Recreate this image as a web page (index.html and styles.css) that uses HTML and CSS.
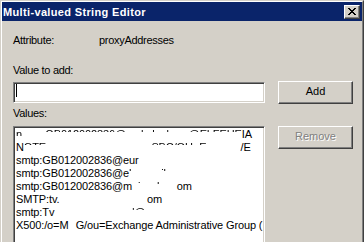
FILE: index.html
```html
<!DOCTYPE html>
<html lang="en">
<head>
    <meta charset="UTF-8">
    <title>Multi-valued String Editor</title>
    <link rel="stylesheet" href="styles.css">
</head>
<body>

    <div class="window">
        <div class="frame">
            <div class="titlebar">
                <span class="title">Multi-valued String Editor</span>
                <div class="close">
                    <svg width="8" height="7" viewBox="0 0 8 7" shape-rendering="crispEdges">
                        <path fill="#000" d="M0 0h2v1H0zM6 0h2v1H6zM1 1h2v1H1zM5 1h2v1H5zM2 2h4v1H2zM3 3h2v1H3zM2 4h4v1H2zM1 5h2v1H1zM5 5h2v1H5zM0 6h2v1H0zM6 6h2v1H6z"/>
                    </svg>
                </div>
            </div>

            <div class="content">
                <div class="attr">
                    <span class="attr-name">Attribute:</span>
                    <span>proxyAddresses</span>
                </div>

                <div class="label label-value">Value to add:</div>
                <div class="row row-input">
                    <div class="textbox"><span class="caret"></span></div>
                    <div class="button">Add</div>
                </div>

                <div class="label label-values">Values:</div>
                <div class="row">
                    <div class="list">
                        <div><span class="half">n</span><span class="hide">otes:</span><span class="top">GB012002836@</span><span class="hide">eu.</span><span class="top">hsbc.l</span><span class="hide">ocal</span><span class="top">@ELFEHE</span>IA</div>
                        <div>N<span class="top">OTE</span><span class="hide">S:GB012002836/O=H</span><span class="top">SBC/OU=E</span><span class="hide">UR/CN</span>/E</div>
                        <div>smtp:GB012002836@eur<span class="hide">ope.hsbc.com</span></div>
                        <div>smtp:GB012002836@e<span class="top">l</span><span class="hide">ab.</span><span class="top">mail.c</span></div>
                        <div>smtp:GB012002836@m<span class="top">ai</span><span class="hide">l.h</span><span class="top">sbc</span><span class="hide">.c</span>om</div>
                        <div>SMTP:tv.<span class="hide">walker@hsb</span><span class="top">c.</span><span class="hide">uk.c</span>om</div>
                        <div>smtp:Tv<span class="hide">.Walker@hsbcn.</span><span class="top">'@euro</span></div>
                        <div>X500:/o=M<span class="hide">S</span>G/ou=Exchange Administrative Group (</div>
                    </div>
                    <div class="button disabled">Remove</div>
                </div>
            </div>
        </div>
    </div>

</body>
</html>
```

FILE: styles.css
```css
body {
    margin: 0;
    width: 364px;
    height: 242px;
    overflow: hidden;
    background-color: #d4d0c8;
    font-family: "Liberation Sans", Arial, sans-serif;
    font-size: 11px;
    color: #000;
}
.window {
    box-sizing: border-box;
    width: 364px;
    height: 242px;
    border: 1px solid;
    border-bottom: none;
    border-color: #d4d0c8 #404040 #404040 #d4d0c8;
}
.frame {
    box-sizing: border-box;
    height: 100%;
    border: 1px solid;
    border-bottom: none;
    border-color: #fff #808080 #808080 #fff;
}
.titlebar {
    display: flex;
    justify-content: space-between;
    align-items: flex-start;
    height: 19px;
    background-color: #0a246a;
    color: #fff;
}
.title {
    padding: 1px 0 0 1px;
    line-height: 18px;
    font-weight: bold;
    letter-spacing: 0.35px;
}
.close {
    box-sizing: border-box;
    width: 16px;
    height: 14px;
    margin: 3px 2px 0 0;
    padding: 2px 0 0 3px;
    background-color: #d4d0c8;
    border: 1px solid;
    border-color: #fff #404040 #404040 #fff;
    box-shadow: inset -1px -1px #808080;
}
.close svg {
    display: block;
}
.content {
    padding-left: 11px;
}
.attr {
    display: flex;
    margin-top: 13px;
    line-height: 13px;
    letter-spacing: -0.3px;
}
.attr-name {
    width: 86px;
}
.label {
    line-height: 13px;
    letter-spacing: -0.3px;
}
.label-value {
    margin-top: 17px;
}
.label-values {
    margin-top: 3px;
}
.row {
    display: flex;
    align-items: flex-start;
}
.row-input {
    margin-top: 4px;
}
.label-values + .row {
    margin-top: 6px;
}
.textbox {
    box-sizing: border-box;
    width: 252px;
    height: 21px;
    margin-top: 1px;
    padding: 1px 0 0 2px;
    background-color: #fff;
    border: 1px solid;
    border-color: #808080 #fff #fff #808080;
    box-shadow: inset 1px 1px #404040, inset -1px -1px #d4d0c8;
}
.caret {
    display: block;
    width: 1px;
    height: 13px;
    background-color: #000;
}
.button {
    box-sizing: border-box;
    width: 75px;
    height: 23px;
    margin-left: 13px;
    background-color: #d4d0c8;
    border: 1px solid;
    border-color: #fff #404040 #404040 #fff;
    box-shadow: inset -1px -1px #808080;
    text-align: center;
    line-height: 19px;
}
.button.disabled {
    color: #808080;
    text-shadow: 1px 1px #fff;
}
.list {
    box-sizing: border-box;
    width: 252px;
    height: 116px;
    padding: 1px 0 0 2px;
    background-color: #fff;
    border: 1px solid;
    border-bottom: none;
    border-color: #808080 #fff #fff #808080;
    box-shadow: inset 1px 1px #404040, inset -1px 0 #d4d0c8;
    line-height: 13px;
    letter-spacing: -0.12px;
    white-space: nowrap;
    overflow: hidden;
}
.hide {
    color: transparent;
}
.top,
.half {
    color: transparent;
    background-image: linear-gradient(#000 0 4px, transparent 4px);
    -webkit-background-clip: text;
    background-clip: text;
}
.half {
    background-image: linear-gradient(#000 0 8px, transparent 8px);
}
```
